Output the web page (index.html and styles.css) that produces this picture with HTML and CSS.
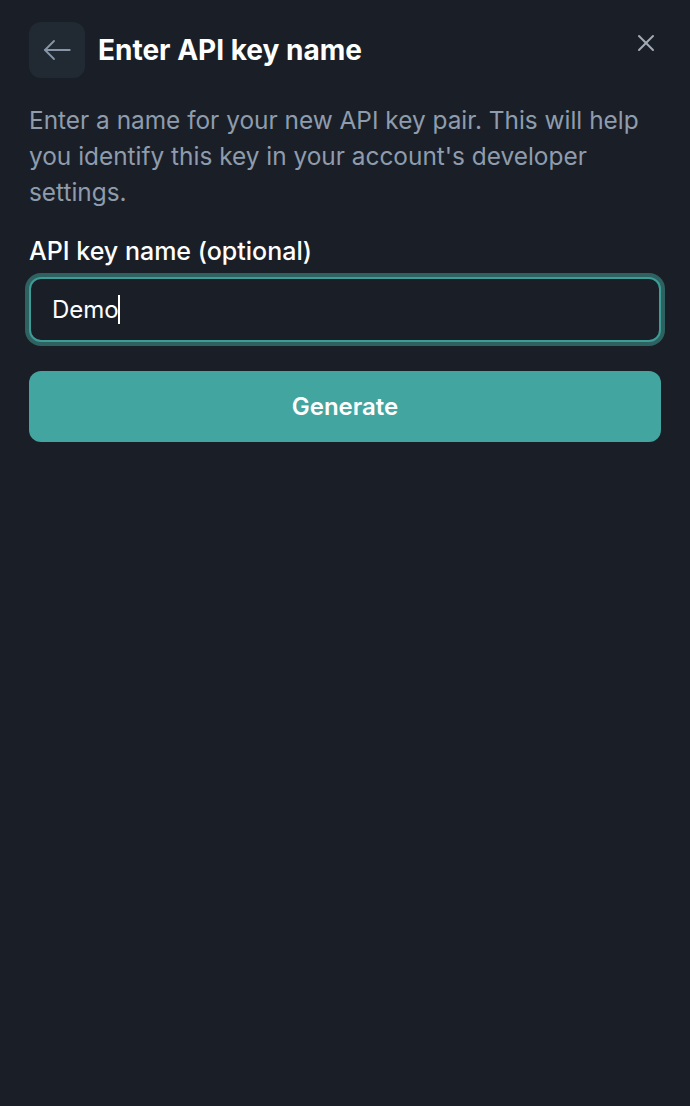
FILE: index.html
```html
<!DOCTYPE html>
<html lang="en">
<head>
    <meta charset="UTF-8">
    <meta name="viewport" content="width=device-width, initial-scale=1.0">
    <title>Enter API key name</title>
    <link rel="stylesheet" href="styles.css">
</head>
<body>
    <div class="panel">
        <div class="header">
            <button class="back-btn" aria-label="Back">
                <svg width="36" height="36" viewBox="0 0 24 24" fill="none" stroke="currentColor" stroke-width="1.2" stroke-linecap="round" stroke-linejoin="round">
                    <path d="M20.5 12H4"/>
                    <path d="M10 6l-6 6 6 6"/>
                </svg>
            </button>
            <h1 class="title">Enter API key name</h1>
            <button class="close-btn" aria-label="Close">
                <svg width="18" height="18" viewBox="0 0 18 18" fill="none" stroke="currentColor" stroke-width="2" stroke-linecap="round">
                    <path d="M2 2l14 14"/>
                    <path d="M16 2L2 16"/>
                </svg>
            </button>
        </div>

        <p class="description">
            Enter a name for your new API key pair. This will help you identify this key in your account's developer settings.
        </p>

        <label class="field-label" for="key-name">API key name (optional)</label>
        <div class="input-wrap">
            <input type="text" id="key-name" class="text-input" value="Demo">
            <span class="caret"></span>
        </div>

        <button class="generate-btn">Generate</button>
    </div>
</body>
</html>
```

FILE: styles.css
```css
body {
    margin: 0;
    background-color: #1a1f27;
    font-family: Inter, "Noto Sans", sans-serif;
    color: #ffffff;
}

.panel {
    padding: 22px 29px 0 29px;
}

.header {
    display: flex;
    align-items: center;
    gap: 13px;
    height: 56px;
}

.back-btn {
    width: 56px;
    height: 56px;
    border: none;
    border-radius: 12px;
    background-color: #212a33;
    color: #8696a8;
    display: flex;
    align-items: center;
    justify-content: center;
    padding: 0;
    cursor: pointer;
}

.title {
    flex: 1;
    margin: 0;
    font-size: 28px;
    font-weight: 700;
    color: #ffffff;
}

.close-btn {
    width: 34px;
    height: 34px;
    margin-right: -2px;
    margin-top: -14px;
    border: none;
    background: none;
    color: #a3abb4;
    display: flex;
    align-items: center;
    justify-content: center;
    padding: 0;
    cursor: pointer;
}

.description {
    margin: 24px 0 0 0;
    font-size: 24.4px;
    line-height: 36px;
    color: #8e9cad;
}

.field-label {
    display: block;
    margin-top: 26px;
    font-size: 25px;
    line-height: 30px;
    font-weight: 500;
    color: #ffffff;
}

.input-wrap {
    position: relative;
    margin-top: 11px;
}

.text-input {
    box-sizing: border-box;
    width: 100%;
    height: 65px;
    padding: 0 21px;
    border: 2px solid #3e9c97;
    border-radius: 12px;
    background-color: #1a1f27;
    box-shadow: 0 0 0 4px #2d6261;
    color: #ffffff;
    font-family: Inter, "Noto Sans", sans-serif;
    font-size: 24px;
    outline: none;
}

.caret {
    position: absolute;
    left: 89px;
    top: 18px;
    width: 2px;
    height: 29px;
    background-color: #ffffff;
}

.generate-btn {
    display: block;
    width: 100%;
    height: 71px;
    margin-top: 29px;
    border: none;
    border-radius: 12px;
    background-color: #42a59f;
    color: #ffffff;
    font-family: Inter, "Noto Sans", sans-serif;
    font-size: 24px;
    font-weight: 600;
    cursor: pointer;
}
```
